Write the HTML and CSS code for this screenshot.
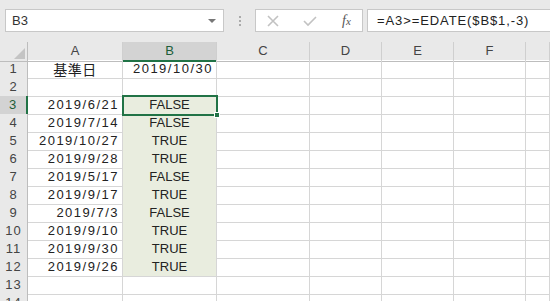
FILE: index.html
```html
<!DOCTYPE html>
<html>
	<head>
		<meta charset="utf-8">
		<title>Excel</title>
	<link rel="stylesheet" href="styles.css">
	</head>
	<body>
	<div class="bar">
		<div class="namebox">
			<span class="name">B3</span>
			<span class="arrow"></span>
		</div>
		<div class="dots"><i></i><i></i><i></i></div>
		<div class="btns">
			<svg class="ico" width="14" height="14" viewBox="0 0 14 14"><path d="M2 2 L12 12 M12 2 L2 12" stroke="#c2c2c2" stroke-width="1.6" fill="none"/></svg>
			<svg class="ico" width="16" height="14" viewBox="0 0 16 14"><path d="M2 7 L6 11 L14 3" stroke="#c2c2c2" stroke-width="1.6" fill="none"/></svg>
			<span class="fx">f<small>x</small></span>
		</div>
		<div class="formula">=A3&gt;=EDATE($B$1,-3)</div>
	</div>

	<div class="sheet">
		<div class="row head">
			<div class="corner"><span class="tri"></span></div>
			<div class="ch">A</div>
			<div class="ch sel">B</div>
			<div class="ch">C</div>
			<div class="ch">D</div>
			<div class="ch">E</div>
			<div class="ch">F</div>
			<div class="ch"></div>
		</div>
		<div class="row">
			<div class="rh">1</div>
			<div class="c mid jp">基準日</div>
			<div class="c num">2019/10/30</div>
			<div class="c"></div><div class="c"></div><div class="c"></div><div class="c"></div><div class="c"></div>
		</div>
		<div class="row">
			<div class="rh">2</div>
			<div class="c"></div><div class="c"></div>
			<div class="c"></div><div class="c"></div><div class="c"></div><div class="c"></div><div class="c"></div>
		</div>
		<div class="row">
			<div class="rh sel">3</div>
			<div class="c num">2019/6/21</div>
			<div class="c mid on active">FALSE<span class="handle"></span></div>
			<div class="c"></div><div class="c"></div><div class="c"></div><div class="c"></div><div class="c"></div>
		</div>
		<div class="row">
			<div class="rh">4</div>
			<div class="c num">2019/7/14</div>
			<div class="c mid on">FALSE</div>
			<div class="c"></div><div class="c"></div><div class="c"></div><div class="c"></div><div class="c"></div>
		</div>
		<div class="row">
			<div class="rh">5</div>
			<div class="c num">2019/10/27</div>
			<div class="c mid on">TRUE</div>
			<div class="c"></div><div class="c"></div><div class="c"></div><div class="c"></div><div class="c"></div>
		</div>
		<div class="row">
			<div class="rh">6</div>
			<div class="c num">2019/9/28</div>
			<div class="c mid on">TRUE</div>
			<div class="c"></div><div class="c"></div><div class="c"></div><div class="c"></div><div class="c"></div>
		</div>
		<div class="row">
			<div class="rh">7</div>
			<div class="c num">2019/5/17</div>
			<div class="c mid on">FALSE</div>
			<div class="c"></div><div class="c"></div><div class="c"></div><div class="c"></div><div class="c"></div>
		</div>
		<div class="row">
			<div class="rh">8</div>
			<div class="c num">2019/9/17</div>
			<div class="c mid on">TRUE</div>
			<div class="c"></div><div class="c"></div><div class="c"></div><div class="c"></div><div class="c"></div>
		</div>
		<div class="row">
			<div class="rh">9</div>
			<div class="c num">2019/7/3</div>
			<div class="c mid on">FALSE</div>
			<div class="c"></div><div class="c"></div><div class="c"></div><div class="c"></div><div class="c"></div>
		</div>
		<div class="row">
			<div class="rh">10</div>
			<div class="c num">2019/9/10</div>
			<div class="c mid on">TRUE</div>
			<div class="c"></div><div class="c"></div><div class="c"></div><div class="c"></div><div class="c"></div>
		</div>
		<div class="row">
			<div class="rh">11</div>
			<div class="c num">2019/9/30</div>
			<div class="c mid on">TRUE</div>
			<div class="c"></div><div class="c"></div><div class="c"></div><div class="c"></div><div class="c"></div>
		</div>
		<div class="row">
			<div class="rh">12</div>
			<div class="c num">2019/9/26</div>
			<div class="c mid on">TRUE</div>
			<div class="c"></div><div class="c"></div><div class="c"></div><div class="c"></div><div class="c"></div>
		</div>
		<div class="row">
			<div class="rh">13</div>
			<div class="c"></div><div class="c"></div>
			<div class="c"></div><div class="c"></div><div class="c"></div><div class="c"></div><div class="c"></div>
		</div>
		<div class="row">
			<div class="rh">14</div>
			<div class="c"></div><div class="c"></div>
			<div class="c"></div><div class="c"></div><div class="c"></div><div class="c"></div><div class="c"></div>
		</div>
	</div>
	</body>
</html>
```

FILE: styles.css
```css
*{
	box-sizing: border-box;
}
body{
	margin: 0;
	width: 550px;
	height: 301px;
	overflow: hidden;
	background: #fff;
	font-family: "Liberation Sans", "Noto Sans CJK JP", sans-serif;
	color: #222;
}

/* formula bar */
.bar{
	height: 42px;
	background: #e9e9e9;
	display: flex;
	align-items: flex-start;
	padding: 9px 0 0 5px;
}
.namebox{
	width: 219px;
	height: 23px;
	background: #fff;
	border: 1px solid #c8c8c8;
	display: flex;
	align-items: center;
	justify-content: space-between;
	padding: 0 7px 0 6px;
}
.name{
	font-size: 13px;
	color: #333;
}
.arrow{
	width: 0;
	height: 0;
	border-left: 4px solid transparent;
	border-right: 4px solid transparent;
	border-top: 4px solid #777;
}
.dots{
	width: 31px;
	height: 23px;
	display: flex;
	flex-direction: column;
	align-items: center;
	justify-content: center;
	gap: 2px;
}
.dots i{
	width: 2px;
	height: 2px;
	background: #aaa;
}
.btns{
	width: 108px;
	height: 23px;
	background: #fff;
	border: 1px solid #c8c8c8;
	display: flex;
	align-items: center;
	padding: 0 10px 0 10px;
	gap: 22px;
}
.fx{
	font-family: "Liberation Serif", serif;
	font-style: italic;
	font-size: 14px;
	color: #555;
	margin-left: 2px;
}
.fx small{
	font-size: 11px;
}
.formula{
	flex: 1;
	height: 23px;
	margin-left: 4px;
	background: #fff;
	border: 1px solid #c8c8c8;
	border-right: none;
	padding-left: 9px;
	font-size: 13px;
	line-height: 21px;
	letter-spacing: 0.9px;
	color: #222;
}

/* sheet */
.row{
	display: grid;
	grid-template-columns: 28px 95px 94px 93px 72px 72px 72px 1fr;
	height: 18px;
}
.head{
	background: #e9e9e9;
}
.corner{
	position: relative;
	border-right: 1px solid #bdbdbd;
	border-bottom: 1px solid #bdbdbd;
}
.tri{
	position: absolute;
	right: 2px;
	bottom: 2px;
	width: 0;
	height: 0;
	border-left: 11px solid transparent;
	border-bottom: 11px solid #c4c4c4;
}
.ch{
	border-right: 1px solid #cfcfcf;
	border-bottom: 1px solid #bdbdbd;
	text-align: center;
	font-size: 13px;
	line-height: 18px;
	color: #444;
}
.ch.sel{
	background: #d3d3d3;
	border-bottom: 2px solid #217346;
	color: #1d5e39;
}
.rh{
	background: #e9e9e9;
	border-right: 1px solid #bdbdbd;
	border-bottom: 1px solid #cfcfcf;
	text-align: center;
	font-size: 13px;
	line-height: 18px;
	letter-spacing: 1px;
	color: #444;
}
.rh.sel{
	background: #d3d3d3;
	border-right: 2px solid #217346;
	color: #1d5e39;
}
.c{
	border-right: 1px solid #d6d6d6;
	border-bottom: 1px solid #d6d6d6;
	font-size: 13px;
	line-height: 18px;
	white-space: nowrap;
}
.num{
	text-align: right;
	padding-right: 3px;
	letter-spacing: 1.5px;
}
.mid{
	text-align: center;
}
.jp{
	font-family: "Noto Sans CJK JP", sans-serif;
	font-size: 14px;
	line-height: 18px;
	letter-spacing: 0.5px;
}
.on{
	background: #e9eddf;
}
.active{
	position: relative;
	outline: 2px solid #217346;
	outline-offset: -1px;
	z-index: 1;
}
.handle{
	position: absolute;
	right: -4px;
	bottom: -4px;
	width: 6px;
	height: 6px;
	background: #217346;
	border: 1px solid #fff;
}
```
